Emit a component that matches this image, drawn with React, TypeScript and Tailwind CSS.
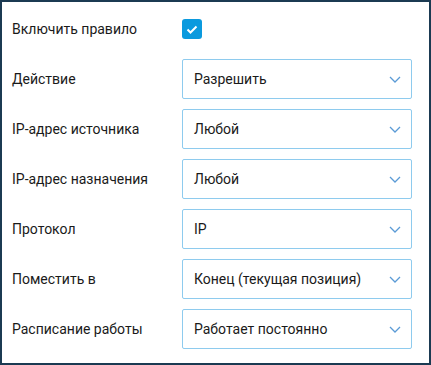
import React from "react";

type Row = { label: string; value: string };

const rows: Row[] = [
  { label: "Действие", value: "Разрешить" },
  { label: "IP-адрес источника", value: "Любой" },
  { label: "IP-адрес назначения", value: "Любой" },
  { label: "Протокол", value: "IP" },
  { label: "Поместить в", value: "Конец (текущая позиция)" },
  { label: "Расписание работы", value: "Работает постоянно" },
];

const Chevron = () => (
  <svg width="12" height="7" viewBox="0 0 12 7" fill="none">
    <path d="M1 1l5 5 5-5" stroke="#5b9bd6" strokeWidth="1.3" />
  </svg>
);

const App = () => {
  return (
    <div
      className="w-[431px] h-[365px] border-2 border-[#1b3a52] bg-white pl-[10px] pt-[7px] text-[14px] text-[#1a1a1a]"
      style={{ fontFamily: "Roboto, 'Liberation Sans', sans-serif" }}
    >
      <div className="grid grid-cols-[170px_230px] gap-y-[10px]">
        <div className="h-[40px] flex items-center">Включить правило</div>
        <div className="h-[40px] flex items-center">
          <span className="w-[20px] h-[20px] rounded-[3px] bg-[#0b9ade] flex items-center justify-center">
            <svg width="12" height="9" viewBox="0 0 12 9" fill="none">
              <path d="M1.5 4.5l3 3 6-6" stroke="#fff" strokeWidth="2" />
            </svg>
          </span>
        </div>
        {rows.map((row) => (
          <React.Fragment key={row.label}>
            <div className="h-[40px] flex items-center">{row.label}</div>
            <div className="h-[40px] border border-[#8ecbee] rounded-[2px] flex items-center justify-between pl-[11px] pr-[10px]">
              <span>{row.value}</span>
              <Chevron />
            </div>
          </React.Fragment>
        ))}
      </div>
    </div>
  );
};

export default App;
